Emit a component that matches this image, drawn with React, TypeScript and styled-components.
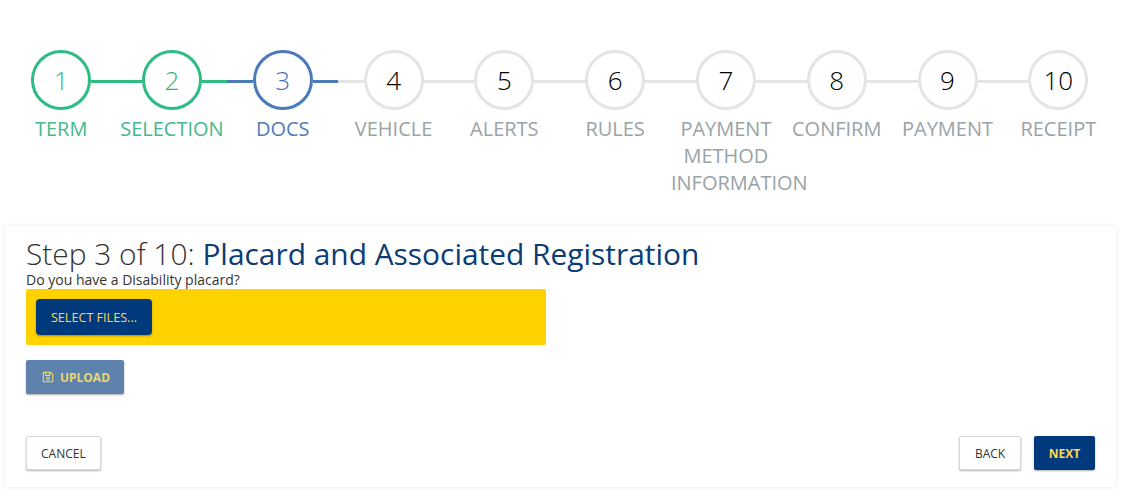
import React from "react";
import styled, { createGlobalStyle } from "styled-components";
import { FaRegSave } from "react-icons/fa";

type Status = "done" | "active" | "todo";

const COLORS: Record<Status, string> = {
  done: "#2dbd83",
  active: "#4a7aba",
  todo: "#e4e4e4",
};

const LABEL_COLORS: Record<Status, string> = {
  done: "#45b98b",
  active: "#4f7cb8",
  todo: "#9aa3a6",
};

const NUMBER_COLORS: Record<Status, string> = {
  done: "#2fb67f",
  active: "#4474b4",
  todo: "#000000",
};

const steps = [
  "TERM",
  "SELECTION",
  "DOCS",
  "VEHICLE",
  "ALERTS",
  "RULES",
  "PAYMENT METHOD INFORMATION",
  "CONFIRM",
  "PAYMENT",
  "RECEIPT",
];

function statusOf(index: number): Status {
  if (index < 2) return "done";
  if (index === 2) return "active";
  return "todo";
}

function App() {
  return (
    <Page>
      <GlobalStyle />
      <Stepper>
        {steps.map((label, i) => {
          const status = statusOf(i);
          return (
            <Step key={label}>
              <CircleRow>
                <Line $color={i === 0 ? "transparent" : COLORS[status]} />
                <Circle $status={status}>{i + 1}</Circle>
                <Line
                  $color={i === steps.length - 1 ? "transparent" : COLORS[status]}
                />
              </CircleRow>
              <Label $status={status}>{label}</Label>
            </Step>
          );
        })}
      </Stepper>
      <Card>
        <Title>
          <Light>Step 3 of 10: </Light>
          Placard and Associated Registration
        </Title>
        <Question>Do you have a Disability placard?</Question>
        <DropZone>
          <SelectButton>SELECT FILES...</SelectButton>
        </DropZone>
        <UploadButton>
          <FaRegSave size={12} />
          UPLOAD
        </UploadButton>
        <Footer>
          <PlainButton>CANCEL</PlainButton>
          <FooterRight>
            <PlainButton>BACK</PlainButton>
            <NextButton>NEXT</NextButton>
          </FooterRight>
        </Footer>
      </Card>
    </Page>
  );
}

export default App;

const GlobalStyle = createGlobalStyle`
  body {
    margin: 0;
    background: #ffffff;
    font-family: "Open Sans", "Liberation Sans", sans-serif;
  }
`;

const Page = styled.div`
  width: 1131px;
  height: 499px;
  overflow: hidden;
  padding: 50px 0 0 5px;
  box-sizing: border-box;
`;

const Stepper = styled.div`
  display: flex;
  height: 176px;
  margin-left: 0.75px;
`;

const Step = styled.div`
  width: 110.8px;
  flex: none;
  display: flex;
  flex-direction: column;
  align-items: center;
`;

const CircleRow = styled.div`
  width: 100%;
  display: flex;
  align-items: center;
`;

const Line = styled.div<{ $color: string }>`
  flex: 1;
  height: 3px;
  margin-top: 2px;
  background: ${(p) => p.$color};
`;

const Circle = styled.div<{ $status: Status }>`
  width: 60px;
  height: 60px;
  flex: none;
  box-sizing: border-box;
  border-radius: 50%;
  border: 3px solid ${(p) => COLORS[p.$status]};
  color: ${(p) => NUMBER_COLORS[p.$status]};
  display: flex;
  align-items: center;
  justify-content: center;
  font-size: 26px;
  font-weight: 300;
`;

const Label = styled.div<{ $status: Status }>`
  width: 110px;
  margin-top: 5px;
  font-size: 20px;
  line-height: 27px;
  text-align: center;
  color: ${(p) => LABEL_COLORS[p.$status]};
`;

const Card = styled.div`
  width: 1111px;
  height: 261px;
  box-sizing: border-box;
  padding: 9px 21px 17px;
  display: flex;
  flex-direction: column;
  align-items: flex-start;
  background: #ffffff;
  box-shadow: 0 0 5px rgba(0, 0, 0, 0.08);
`;

const Title = styled.div`
  font-size: 29.9px;
  line-height: 38px;
  color: #0b3c74;
`;

const Light = styled.span`
  font-weight: 300;
  color: #333333;
`;

const Question = styled.div`
  font-size: 14px;
  line-height: 14px;
  color: #333333;
  margin-bottom: 2px;
`;

const DropZone = styled.div`
  width: 520px;
  height: 56px;
  box-sizing: border-box;
  padding: 10px;
  background: #ffd200;
  border-radius: 2px;
`;

const BaseButton = styled.button`
  font-family: inherit;
  font-size: 12px;
  border-radius: 2px;
  cursor: pointer;
  box-sizing: border-box;
  display: inline-flex;
  align-items: center;
  justify-content: center;
`;

const SelectButton = styled(BaseButton)`
  width: 116px;
  height: 36px;
  border: none;
  border-radius: 4px;
  background: #003a7d;
  color: #ffd84d;
  font-size: 12.6px;
  box-shadow: 0 1px 2px rgba(0, 0, 0, 0.35);
`;

const UploadButton = styled(BaseButton)`
  width: 98px;
  height: 34px;
  margin-top: 15px;
  padding: 0 0 0 2px;
  gap: 6px;
  border: none;
  background: #5f82ac;
  color: #e8d770;
  font-weight: 700;
  box-shadow: 0 1px 2px rgba(0, 0, 0, 0.35);
`;

const Footer = styled.div`
  width: 100%;
  margin-top: auto;
  display: flex;
  justify-content: space-between;
  box-sizing: border-box;
`;

const FooterRight = styled.div`
  display: flex;
  gap: 13px;
`;

const PlainButton = styled(BaseButton)`
  min-width: 62px;
  padding: 0 14px;
  height: 34px;
  background: #ffffff;
  color: #333333;
  border: 1px solid #d8d8d8;
  box-shadow: 0 1px 2px rgba(0, 0, 0, 0.3);
`;

const NextButton = styled(BaseButton)`
  width: 61px;
  height: 34px;
  border: none;
  background: #003a7d;
  color: #ffd84d;
  font-weight: 700;
  box-shadow: 0 1px 2px rgba(0, 0, 0, 0.3);
`;
